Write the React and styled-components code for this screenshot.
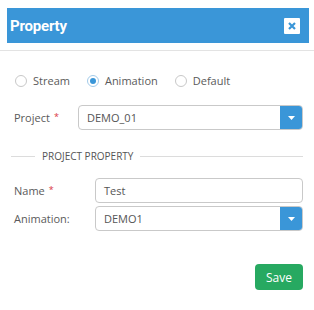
import React from "react";
import styled, { createGlobalStyle } from "styled-components";

const Global = createGlobalStyle`
  body {
    margin: 0;
    background: #fff;
    font-family: "Open Sans", "Noto Sans", sans-serif;
    color: #5a5a5a;
  }
`;

const Panel = styled.div`
  width: 314px;
  height: 310px;
  box-sizing: border-box;
`;

const HeadWrap = styled.div`
  padding: 8px 5px 7px 7px;
  border-bottom: 1px solid #e3e3e3;
`;

const Head = styled.div`
  height: 35px;
  background: #3a96d8;
  display: flex;
  align-items: center;
  justify-content: space-between;
  padding: 0 9px 0 3px;
`;

const Title = styled.span`
  font-family: Roboto, "Liberation Sans", sans-serif;
  font-weight: 700;
  font-size: 15px;
  color: #fff;
  letter-spacing: -0.2px;
`;

const Close = styled.button`
  width: 16px;
  height: 16px;
  padding: 0;
  border: none;
  border-radius: 1px;
  background: #fff;
  display: flex;
  align-items: center;
  justify-content: center;
`;

const Body = styled.div`
  padding: 24px 11px 0 14px;
`;

const Radios = styled.div`
  display: flex;
  align-items: center;
  height: 12px;
  padding-left: 1px;
  gap: 17px;
`;

const RadioItem = styled.label`
  display: flex;
  align-items: center;
  gap: 6px;
  font-size: 11px;
  line-height: 12px;
`;

const Circle = styled.span`
  width: 12px;
  height: 12px;
  box-sizing: border-box;
  border-radius: 50%;
  border: 1px solid ${({ $on }) => ($on ? "#a3cbea" : "#c8c8c8")};
  display: flex;
  align-items: center;
  justify-content: center;
  &::after {
    content: "";
    width: 6px;
    height: 6px;
    border-radius: 50%;
    background: ${({ $on }) => ($on ? "#3a96d8" : "transparent")};
  }
`;

const Row = styled.div`
  display: flex;
  align-items: center;
  margin-top: ${({ $top }) => $top}px;
`;

const Label = styled.span`
  width: ${({ $w }) => $w}px;
  font-size: 11px;
  flex-shrink: 0;
`;

const Req = styled.sup`
  color: #d9363e;
  margin-left: 4px;
  font-size: 9px;
  line-height: 0;
  vertical-align: 2px;
`;

const Field = styled.div`
  flex: 1;
  height: 25px;
  box-sizing: border-box;
  border: 1px solid #c9c9c9;
  border-radius: 4px;
  display: flex;
  align-items: stretch;
  overflow: hidden;
`;

const Value = styled.span`
  flex: 1;
  font-size: 11px;
  display: flex;
  align-items: center;
  padding-left: 8px;
  color: #555;
`;

const Caret = styled.span`
  width: 23px;
  background: #3a96d8;
  margin: -1px -1px -1px 0;
  display: flex;
  align-items: center;
  justify-content: center;
`;

const Divider = styled.div`
  display: flex;
  align-items: center;
  margin: 19px 0 0 -3px;
  gap: 7px;
  font-size: 10px;
  color: #555;
  &::before,
  &::after {
    content: "";
    height: 1px;
    background: #dcdcdc;
  }
  &::before {
    width: 24px;
  }
  &::after {
    flex: 1;
  }
`;

const Footer = styled.div`
  display: flex;
  justify-content: flex-end;
  margin-top: 33px;
`;

const Save = styled.button`
  width: 48px;
  height: 26px;
  border: none;
  border-radius: 4px;
  background: #27a961;
  color: #fff;
  font-family: "Open Sans", "Noto Sans", sans-serif;
  font-size: 12px;
  padding: 0;
`;

const Arrow = () => (
  <svg width="7" height="4" viewBox="0 0 7 4">
    <path d="M0 0h7L3.5 4z" fill="#fff" />
  </svg>
);

export default function App() {
  return (
    <Panel>
      <Global />
      <HeadWrap>
        <Head>
          <Title>Property</Title>
          <Close aria-label="close">
            <svg width="8" height="8" viewBox="0 0 8 8">
              <path d="M1 1l6 6M7 1l-6 6" stroke="#3a96d8" strokeWidth="2.2" />
            </svg>
          </Close>
        </Head>
      </HeadWrap>
      <Body>
        <Radios>
          <RadioItem><Circle />Stream</RadioItem>
          <RadioItem><Circle $on />Animation</RadioItem>
          <RadioItem><Circle />Default</RadioItem>
        </Radios>
        <Row $top={18}>
          <Label $w={64}>Project<Req>*</Req></Label>
          <Field>
            <Value>DEMO_01</Value>
            <Caret><Arrow /></Caret>
          </Field>
        </Row>
        <Divider>PROJECT PROPERTY</Divider>
        <Row $top={15}>
          <Label $w={81}>Name<Req>*</Req></Label>
          <Field>
            <Value>Test</Value>
          </Field>
        </Row>
        <Row $top={3}>
          <Label $w={81}>Animation:</Label>
          <Field>
            <Value>DEMO1</Value>
            <Caret><Arrow /></Caret>
          </Field>
        </Row>
        <Footer>
          <Save>Save</Save>
        </Footer>
      </Body>
    </Panel>
  );
}
